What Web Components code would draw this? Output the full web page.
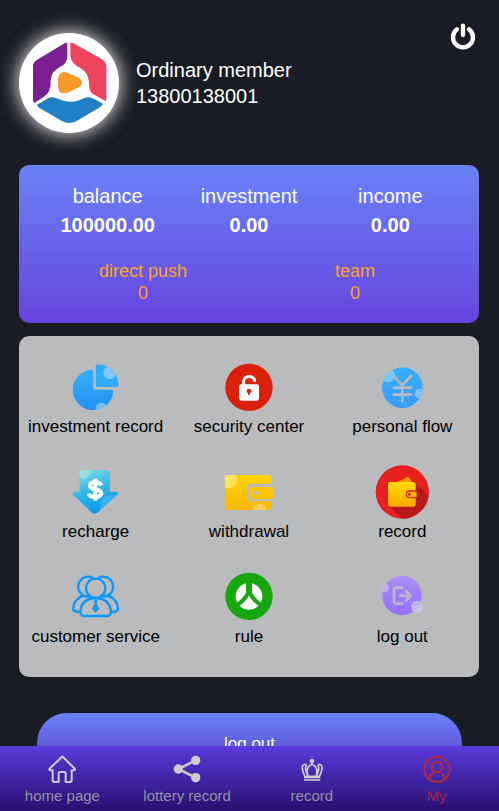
<!DOCTYPE html>
<html lang="en">
<head>
<meta charset="utf-8">
<meta name="viewport" content="width=device-width, initial-scale=1">
<title>My</title>
<style>
    body {
        margin: 0;
        background: #191c23;
        color: #fff;
        font-family: "Liberation Sans", Arial, sans-serif;
    }
</style>
</head>
<body>
<member-page>
    <profile-header slot="header" name="Ordinary member" phone="13800138001"></profile-header>

    <balance-card>
        <stat-item label="balance" value="100000.00"></stat-item>
        <stat-item label="investment" value="0.00"></stat-item>
        <stat-item label="income" value="0.00"></stat-item>
        <stat-item slot="team" minor label="direct push" value="0"></stat-item>
        <stat-item slot="team" minor label="team" value="0"></stat-item>
    </balance-card>

    <menu-grid>
        <menu-item icon="pie" href="#investment">investment record</menu-item>
        <menu-item icon="lock" href="#security">security center</menu-item>
        <menu-item icon="yen" href="#flow">personal flow</menu-item>
        <menu-item icon="recharge" href="#recharge">recharge</menu-item>
        <menu-item icon="withdrawal" href="#withdrawal">withdrawal</menu-item>
        <menu-item icon="wallet" href="#record">record</menu-item>
        <menu-item icon="service" href="#service">customer service</menu-item>
        <menu-item icon="rule" href="#rule">rule</menu-item>
        <menu-item icon="exit" href="#logout">log out</menu-item>
    </menu-grid>

    <logout-button>log out</logout-button>

    <tab-bar slot="footer">
        <tab-item icon="home" href="#home">home page</tab-item>
        <tab-item icon="share" href="#lottery">lottery record</tab-item>
        <tab-item icon="crown" href="#orders">record</tab-item>
        <tab-item icon="user" href="#my" active>My</tab-item>
    </tab-bar>
</member-page>

<script>
// name: [viewBox, markup]
const icons = {
    logo: ['57 69 300 300', `
        <path fill="#7b2091" d="M202 99V142Q200 163 180 171Q153 184 152 212Q154 246 130 262L103 279Q99 276 99 268V165Q100 157 109 151L190 102Q199 97 202 99Z"/>
        <path fill="#ef4460" d="M211 98Q214 96 221 100L306 148Q319 156 319 170V265Q319 274 316 273L279 252Q267 245 267 218Q266 188 240 173Q216 164 211 139Z"/>
        <path fill="#217fc5" d="M110 285L142 266Q153 259 168 264Q213 286 253 264Q266 259 278 265L309 281Q308 286 296 294L235 330Q211 347 186 333L117 293Z"/>
        <path fill="#f79a27" d="M187 187Q193 185 204 189L236 203Q254 215 241 229L207 247Q190 253 179 246Q173 236 174 209Q174 193 187 187Z"/>`],
    power: ['60 36 78 84', `
        <path d="M81 58A30 30 0 1 0 117 58" fill="none" stroke="#fff" stroke-width="13" stroke-linecap="round"/>
        <path d="M99 47V75" stroke="#fff" stroke-width="13" stroke-linecap="round"/>`],
    pie: ['27 15 162 162', `
        <linearGradient id="g" x2="0" y2="1"><stop stop-color="#35b3fa"/><stop offset="1" stop-color="#238ef5"/></linearGradient>
        <clipPath id="a"><path d="M92 44Q100 43 100 50V99Q100 104 105 104H154Q160 104 160 111A61 61 0 1 1 92 44Z"/></clipPath>
        <clipPath id="b"><path d="M114 28A66 66 0 0 1 176 90Q176 96 169 96H112Q107 96 107 91V34Q107 28 114 28Z"/></clipPath>
        <g clip-path="url(#a)"><path fill="url(#g)" d="M37 40H162V170H37Z"/><circle cx="124" cy="160" r="17" fill="#79bcfa"/></g>
        <g clip-path="url(#b)"><path fill="#2dadf9" d="M105 26H178V98H105Z"/><circle cx="149" cy="53" r="19" fill="#7acbfb"/></g>`],
    lock: ['21 15 162 162', `
        <circle cx="102" cy="97" r="71" fill="#db200a"/>
        <path d="M86 92V78A17 17 0 0 1 119 77" fill="none" stroke="#fff" stroke-width="9" stroke-linecap="round"/>
        <rect x="72" y="88" width="60" height="49" rx="7" fill="#fff"/>
        <circle cx="102" cy="108" r="7" fill="#db200a"/><path d="M102 108V119" stroke="#db200a" stroke-width="6"/>`],
    yen: ['15 15 162 162', `
        <linearGradient id="g" x2="0" y2="1"><stop stop-color="#32b0f7"/><stop offset="1" stop-color="#3b9cff"/></linearGradient>
        <clipPath id="a"><circle cx="97" cy="98" r="61"/></clipPath>
        <g clip-path="url(#a)"><path fill="url(#g)" d="M36 37H158V159H36Z"/><circle cx="54" cy="61" r="21" fill="#79c8fa"/><circle cx="149" cy="116" r="15" fill="#7fc6fc"/></g>
        <path d="M73 65L97 91L123 63M97 91V139M72 98H123M72 119H123" fill="none" stroke="#b9bbbd" stroke-width="8" stroke-linecap="round"/>`],
    recharge: ['27 15 162 162', `
        <linearGradient id="g" x2=".35" y2="1"><stop stop-color="#8ee1dd"/><stop offset=".5" stop-color="#3ab9e6"/><stop offset="1" stop-color="#0499ee"/></linearGradient>
        <clipPath id="a"><path d="M70 30H140Q150 30 150 40V95H168Q177 97 172 104L112 158Q104 164 96 158L40 105Q34 98 43 95H59V40Q60 30 70 30Z"/></clipPath>
        <g clip-path="url(#a)"><path fill="url(#g)" d="M34 28H178V165H34Z"/><circle cx="70" cy="35" r="22" fill="#a6e8e6" opacity=".65"/><circle cx="154" cy="141" r="35" fill="#52b7f5" opacity=".6"/></g>
        <path d="M124 76Q121 67 106 67Q90 67 90 77Q90 85 106 88Q125 91 124 101Q122 111 106 111Q88 111 86 100M106 56V122" fill="none" stroke="#fff" stroke-width="12"/>`],
    withdrawal: ['21 15 162 162', `
        <linearGradient id="g" x2="0" y2="1"><stop stop-color="#fed502"/><stop offset="1" stop-color="#ffb706"/></linearGradient>
        <clipPath id="a"><path d="M38 45H160Q169 45 169 53V71H111Q95 72 95 87V108Q96 124 111 124H168V142Q168 150 160 150H38Q29 150 29 141V54Q29 45 38 45Z"/></clipPath>
        <g clip-path="url(#a)"><path fill="url(#g)" d="M29 45H170V151H29Z"/><circle cx="38" cy="57" r="28" fill="#ffe35c"/><circle cx="133" cy="150" r="19" fill="#ffd35d"/></g>
        <path fill="#ffc404" d="M112 81H170Q175 81 175 86V112Q175 117 170 117H112Q105 116 105 109V88Q105 81 112 81Z"/><circle cx="123" cy="99" r="7" fill="#b9bbbd"/>`],
    wallet: ['15 15 162 162', `
        <linearGradient id="g" x2="0" y2="1"><stop stop-color="#ffdc08"/><stop offset="1" stop-color="#ffa800"/></linearGradient>
        <clipPath id="a"><circle cx="97" cy="96" r="80"/></clipPath>
        <circle cx="97" cy="96" r="80" fill="#e92020"/>
        <path clip-path="url(#a)" fill="#b9191b" d="M123 54L190 121V190H110L57 138L137 130V70Z"/>
        <path fill="#ff9800" d="M81 67L112 51Q120 50 121 57L126 69Z"/>
        <path fill="url(#g)" d="M61 66H130Q137 67 137 74V91H116Q107 93 107 103Q107 113 116 115H137V133Q137 140 130 140H62Q54 139 54 131V73Q54 66 61 66Z"/>
        <path fill="#fdb807" d="M117 95H140V111H117Q110 109 110 103Q110 97 117 95Z"/><circle cx="118" cy="103" r="4" fill="#c82018"/>`],
    service: ['27 15 162 162', `
        <g fill="none" stroke="#0a98fb" stroke-width="7" stroke-linecap="round" stroke-linejoin="round">
        <circle cx="107" cy="70" r="29"/>
        <path d="M98 39A29 29 0 1 0 70 91M116 39A29 29 0 1 1 144 91M68 92Q40 106 39 132Q40 140 57 141M146 92Q174 106 174 132Q172 140 157 141M61 142Q63 101 107 99Q151 101 153 142Q151 152 143 153H71Q63 152 61 142ZM64 94Q75 91 86 96M149 94Q138 91 127 96"/></g>
        <path fill="#0a98fb" d="M102 105H112L110 116L118 132L107 143L96 132L104 116Z"/>`],
    rule: ['486 15 162 162', `
        <circle cx="567" cy="94" r="71" fill="#16a60e"/><circle cx="567" cy="94" r="40" fill="#fff"/>
        <path d="M567 45V76M567 73Q563 99 529 122M567 73Q571 99 605 122" fill="none" stroke="#16a60e" stroke-width="12"/>
        <path d="M567 52V78" stroke="#16a60e" stroke-width="18"/>`],
    exit: ['15 15 162 162', `
        <linearGradient id="g" x2="0" y2="1"><stop stop-color="#aa90f5"/><stop offset="1" stop-color="#946dff"/></linearGradient>
        <circle cx="96" cy="92" r="59" fill="url(#g)"/>
        <circle cx="45" cy="69" r="12" fill="#c8b9f2" opacity=".8"/><circle cx="141" cy="125" r="18" fill="#cfc9e4" opacity=".75"/>
        <path d="M97 68H79Q72 68 72 75V109Q72 116 79 116H97M91 92H121M108 78L122 92L108 106" fill="none" stroke="#bbb9c8" stroke-width="8" stroke-linecap="round" stroke-linejoin="round"/>`],
    home: ['142 165 84 84', `
        <path d="M184 170L146 207Q145 211 149 211H156V241Q156 246 161 246H174V220Q174 216 178 216H191Q195 216 195 220V246H208Q213 246 213 241V211H220Q224 211 223 207L187 171Q185 169 184 170Z" fill="none" stroke="currentColor" stroke-width="6" stroke-linejoin="round"/>`],
    share: ['516 165 84 84', `
        <path d="M584 181L532 207L584 233" fill="none" stroke="currentColor" stroke-width="8"/>
        <g fill="currentColor"><circle cx="584" cy="181" r="14"/><circle cx="532" cy="207" r="14"/><circle cx="584" cy="233" r="14"/></g>`],
    crown: ['892 165 84 84', `
        <circle cx="934" cy="183" r="7" fill="currentColor"/>
        <path d="M934 186V194M934 193Q914 202 921 225M934 193Q954 202 947 225M918 194Q903 191 905 205Q906 217 913 229H956Q963 217 964 205Q965 191 951 194M918 194Q910 207 922 227M951 194Q959 207 947 227M910 232H959M910 240H959" fill="none" stroke="currentColor" stroke-width="5"/>`],
    user: ['1267 165 84 84', `
        <g fill="none" stroke="currentColor" stroke-width="6" stroke-linecap="round"><circle cx="1309" cy="208" r="38"/>
        <circle cx="1309" cy="201" r="16"/><path d="M1287 238Q1287 222 1301 217M1325 222Q1331 229 1332 237"/></g>`]
};

class AppIcon extends HTMLElement {
    connectedCallback() {
        const [box, markup] = icons[this.getAttribute('name')];
        this.attachShadow({ mode: 'open' });
        this.shadowRoot.innerHTML = `
            <style>
                :host {
                    display: block;
                    flex: none;
                }

                svg {
                    display: block;
                    width: 100%;
                    height: 100%;
                }
            </style>
            <svg viewBox="${box}" aria-hidden="true">${markup}</svg>
        `;
    }
}

class MemberPage extends HTMLElement {
    connectedCallback() {
        this.attachShadow({ mode: 'open' });
        // main scrolls under the fixed tab bar
        this.shadowRoot.innerHTML = `
            <style>
                :host {
                    display: block;
                }

                main {
                    box-sizing: border-box;
                    height: 100vh;
                    overflow-y: auto;
                    scrollbar-width: none;
                    padding: 0 20px 80px 19px;
                }
            </style>
            <main>
                <slot name="header"></slot>
                <slot></slot>
            </main>
            <slot name="footer"></slot>
        `;
    }
}

class ProfileHeader extends HTMLElement {
    connectedCallback() {
        this.attachShadow({ mode: 'open' });
        this.shadowRoot.innerHTML = `
            <style>
                :host {
                    display: flex;
                    align-items: center;
                    gap: 17px;
                    padding: 33px 0 32px;
                    font-size: 20px;
                    line-height: 26px;
                }

                .avatar {
                    width: 100px;
                    height: 100px;
                    border-radius: 50%;
                    background: #fff;
                    box-shadow: 0 0 20px #fff;
                }

                .info {
                    flex: 1;
                }

                button {
                    align-self: flex-start;
                    margin: -11px 3px 0 0;
                    padding: 0;
                    border: 0;
                    background: none;
                    cursor: pointer;
                }

                button app-icon {
                    width: 26px;
                    height: 28px;
                }
            </style>
            <app-icon class="avatar" name="logo"></app-icon>
            <div class="info">
                <div>${this.getAttribute('name')}</div>
                <div>${this.getAttribute('phone')}</div>
            </div>
            <button type="button" aria-label="Sign out"><app-icon name="power"></app-icon></button>
        `;
    }
}

class BalanceCard extends HTMLElement {
    connectedCallback() {
        this.attachShadow({ mode: 'open' });
        this.shadowRoot.innerHTML = `
            <style>
                :host {
                    display: block;
                    padding: 17px 18px 19px;
                    border-radius: 10px;
                    background: linear-gradient(#6a82f8, #6744df);
                }

                .row {
                    display: grid;
                    grid-auto-flow: column;
                    grid-auto-columns: 1fr;
                }

                .team {
                    margin-top: 20px;
                }
            </style>
            <div class="row"><slot></slot></div>
            <div class="row team"><slot name="team"></slot></div>
        `;
    }
}

class StatItem extends HTMLElement {
    connectedCallback() {
        this.attachShadow({ mode: 'open' });
        this.shadowRoot.innerHTML = `
            <style>
                :host {
                    display: block;
                    text-align: center;
                    font-size: 20px;
                    line-height: 29px;
                }

                .value {
                    font-weight: bold;
                }

                :host([minor]) {
                    color: #ffa420;
                    font-size: 18px;
                    line-height: 22px;
                }

                :host([minor]) .value {
                    font-weight: normal;
                }
            </style>
            <div>${this.getAttribute('label')}</div>
            <div class="value">${this.getAttribute('value')}</div>
        `;
    }
}

class MenuGrid extends HTMLElement {
    connectedCallback() {
        this.attachShadow({ mode: 'open' });
        this.shadowRoot.innerHTML = `
            <style>
                :host {
                    display: grid;
                    grid-template-columns: repeat(3, 1fr);
                    row-gap: 25px;
                    margin-top: 13px;
                    padding: 24px 0 27px;
                    border-radius: 10px;
                    background: #b9bbbd;
                }
            </style>
            <slot></slot>
        `;
    }
}

class MenuItem extends HTMLElement {
    connectedCallback() {
        this.attachShadow({ mode: 'open' });
        this.shadowRoot.innerHTML = `
            <style>
                :host {
                    display: block;
                }

                a {
                    display: flex;
                    flex-direction: column;
                    align-items: center;
                    color: #000;
                    font-size: 17px;
                    line-height: 26px;
                    white-space: nowrap;
                    text-decoration: none;
                }

                app-icon {
                    width: 54px;
                    height: 54px;
                }
            </style>
            <a href="${this.getAttribute('href')}">
                <app-icon name="${this.getAttribute('icon')}"></app-icon>
                <span><slot></slot></span>
            </a>
        `;
    }
}

class LogoutButton extends HTMLElement {
    connectedCallback() {
        this.attachShadow({ mode: 'open' });
        this.shadowRoot.innerHTML = `
            <style>
                :host {
                    display: block;
                    margin: 36px 17px 0 18px;
                }

                button {
                    display: block;
                    width: 100%;
                    height: 62px;
                    border: 0;
                    border-radius: 30px;
                    background: linear-gradient(#6a82f8, #5a3bc0);
                    color: #fff;
                    font: inherit;
                    font-size: 17px;
                    cursor: pointer;
                }
            </style>
            <button type="button"><slot></slot></button>
        `;
    }
}

class TabBar extends HTMLElement {
    connectedCallback() {
        this.attachShadow({ mode: 'open' });
        this.shadowRoot.innerHTML = `
            <style>
                :host {
                    display: block;
                    position: fixed;
                    left: 0;
                    right: 0;
                    bottom: 0;
                    background: linear-gradient(#5a3bdc, #280f70);
                }

                nav {
                    display: grid;
                    grid-template-columns: repeat(4, 1fr);
                    padding: 9px 0 5px;
                }
            </style>
            <nav><slot></slot></nav>
        `;
    }
}

class TabItem extends HTMLElement {
    connectedCallback() {
        this.attachShadow({ mode: 'open' });
        this.shadowRoot.innerHTML = `
            <style>
                :host {
                    display: block;
                    --icon: #d0cccc;
                    --label: #9792a3;
                }

                :host([active]) {
                    --icon: #b52a38;
                    --label: #a92745;
                }

                a {
                    display: flex;
                    flex-direction: column;
                    align-items: center;
                    gap: 3px;
                    color: var(--label);
                    font-size: 15px;
                    line-height: 20px;
                    white-space: nowrap;
                    text-decoration: none;
                }

                app-icon {
                    width: 28px;
                    height: 28px;
                    color: var(--icon);
                }
            </style>
            <a href="${this.getAttribute('href')}">
                <app-icon name="${this.getAttribute('icon')}"></app-icon>
                <span><slot></slot></span>
            </a>
        `;
    }
}

customElements.define('app-icon', AppIcon);
customElements.define('member-page', MemberPage);
customElements.define('profile-header', ProfileHeader);
customElements.define('balance-card', BalanceCard);
customElements.define('stat-item', StatItem);
customElements.define('menu-grid', MenuGrid);
customElements.define('menu-item', MenuItem);
customElements.define('logout-button', LogoutButton);
customElements.define('tab-bar', TabBar);
customElements.define('tab-item', TabItem);
</script>
</body>
</html>
